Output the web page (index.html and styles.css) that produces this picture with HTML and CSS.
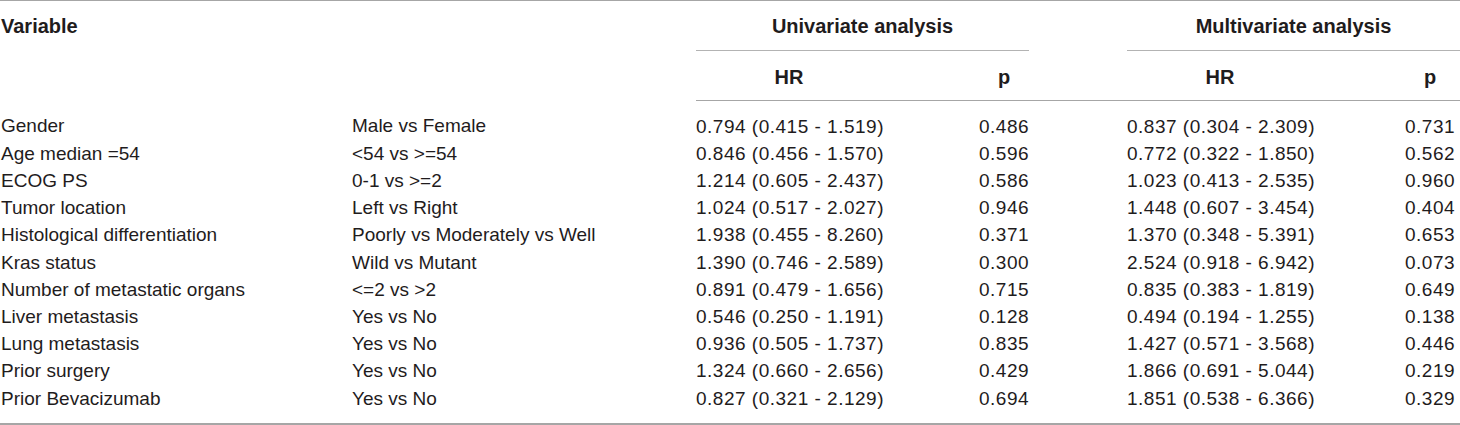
FILE: index.html
```html
<!DOCTYPE html>
<html lang="en">
<head>
  <meta charset="UTF-8" />
  <meta name="viewport" content="width=device-width, initial-scale=1.0" />
  <title>Cox regression analysis</title>
  <link rel="stylesheet" href="styles.css">
</head>
<body>
  <table class="cox">
    <colgroup>
      <col class="c-name">
      <col class="c-cmp">
      <col class="c-hr-uni">
      <col class="c-p">
      <col class="c-hr-multi">
      <col class="c-p-last">
    </colgroup>
    <thead>
      <tr>
        <th class="var" rowspan="2" colspan="2">Variable</th>
        <th class="group" colspan="2"><div class="group-label">Univariate analysis</div></th>
        <th class="group multi" colspan="2"><div class="group-label">Multivariate analysis</div></th>
      </tr>
      <tr class="sub">
        <th class="hr uni">HR</th>
        <th class="p">p</th>
        <th class="hr multi">HR</th>
        <th class="p last">p</th>
      </tr>
    </thead>
    <tbody>
      <tr>
        <td class="name">Gender</td>
        <td>Male vs Female</td>
        <td class="hr uni">0.794 (0.415 - 1.519)</td>
        <td class="p">0.486</td>
        <td class="hr multi">0.837 (0.304 - 2.309)</td>
        <td class="p last">0.731</td>
      </tr>
      <tr>
        <td class="name">Age median =54</td>
        <td>&lt;54 vs &gt;=54</td>
        <td class="hr uni">0.846 (0.456 - 1.570)</td>
        <td class="p">0.596</td>
        <td class="hr multi">0.772 (0.322 - 1.850)</td>
        <td class="p last">0.562</td>
      </tr>
      <tr>
        <td class="name">ECOG PS</td>
        <td>0-1 vs &gt;=2</td>
        <td class="hr uni">1.214 (0.605 - 2.437)</td>
        <td class="p">0.586</td>
        <td class="hr multi">1.023 (0.413 - 2.535)</td>
        <td class="p last">0.960</td>
      </tr>
      <tr>
        <td class="name">Tumor location</td>
        <td>Left vs Right</td>
        <td class="hr uni">1.024 (0.517 - 2.027)</td>
        <td class="p">0.946</td>
        <td class="hr multi">1.448 (0.607 - 3.454)</td>
        <td class="p last">0.404</td>
      </tr>
      <tr>
        <td class="name">Histological differentiation</td>
        <td>Poorly vs Moderately vs Well</td>
        <td class="hr uni">1.938 (0.455 - 8.260)</td>
        <td class="p">0.371</td>
        <td class="hr multi">1.370 (0.348 - 5.391)</td>
        <td class="p last">0.653</td>
      </tr>
      <tr>
        <td class="name">Kras status</td>
        <td>Wild vs Mutant</td>
        <td class="hr uni">1.390 (0.746 - 2.589)</td>
        <td class="p">0.300</td>
        <td class="hr multi">2.524 (0.918 - 6.942)</td>
        <td class="p last">0.073</td>
      </tr>
      <tr>
        <td class="name">Number of metastatic organs</td>
        <td>&lt;=2 vs &gt;2</td>
        <td class="hr uni">0.891 (0.479 - 1.656)</td>
        <td class="p">0.715</td>
        <td class="hr multi">0.835 (0.383 - 1.819)</td>
        <td class="p last">0.649</td>
      </tr>
      <tr>
        <td class="name">Liver metastasis</td>
        <td>Yes vs No</td>
        <td class="hr uni">0.546 (0.250 - 1.191)</td>
        <td class="p">0.128</td>
        <td class="hr multi">0.494 (0.194 - 1.255)</td>
        <td class="p last">0.138</td>
      </tr>
      <tr>
        <td class="name">Lung metastasis</td>
        <td>Yes vs No</td>
        <td class="hr uni">0.936 (0.505 - 1.737)</td>
        <td class="p">0.835</td>
        <td class="hr multi">1.427 (0.571 - 3.568)</td>
        <td class="p last">0.446</td>
      </tr>
      <tr>
        <td class="name">Prior surgery</td>
        <td>Yes vs No</td>
        <td class="hr uni">1.324 (0.660 - 2.656)</td>
        <td class="p">0.429</td>
        <td class="hr multi">1.866 (0.691 - 5.044)</td>
        <td class="p last">0.219</td>
      </tr>
      <tr>
        <td class="name">Prior Bevacizumab</td>
        <td>Yes vs No</td>
        <td class="hr uni">0.827 (0.321 - 2.129)</td>
        <td class="p">0.694</td>
        <td class="hr multi">1.851 (0.538 - 6.366)</td>
        <td class="p last">0.329</td>
      </tr>
    </tbody>
  </table>
</body>
</html>
```

FILE: styles.css
```css
body {
  margin: 0;
  background: #fff;
  font-family: "Liberation Sans", Arial, sans-serif;
  color: #1f1c1d;
}
.cox {
  width: 1460px;
  border-collapse: collapse;
  table-layout: fixed;
  font-size: 19px;
  border-top: 1px solid #a6a6a6;
  border-bottom: 2px solid #a6a6a6;
}
.c-name { width: 352px; }
.c-cmp { width: 344px; }
.c-hr-uni { width: 283px; }
.c-p { width: 50px; }
.c-hr-multi { width: 376px; }
.c-p-last { width: 55px; }

.cox th,
.cox td {
  padding: 0;
  white-space: nowrap;
}
.cox th {
  font-size: 20px;
  font-weight: bold;
  line-height: 22px;
}
.cox th.var {
  text-align: left;
  vertical-align: top;
  padding: 14px 0 0 1px;
}
.cox th.group {
  text-align: center;
  padding-top: 14px;
}
.cox th.group.multi {
  padding-left: 98px;
}
.group-label {
  padding-bottom: 13px;
  border-bottom: 1px solid #b3b3b3;
}
.cox .sub th {
  padding-top: 15px;
  padding-bottom: 12px;
  border-bottom: 1px solid #a6a6a6;
}
.cox td {
  line-height: 27.2px;
}
.cox td.name {
  padding-left: 1px;
}
.cox td.hr,
.cox td.p {
  letter-spacing: 0.5px;
}
.cox .hr {
  text-align: center;
}
.cox .hr.uni {
  padding-right: 97px;
}
.cox .hr.multi {
  padding-left: 98px;
  padding-right: 92px;
}
.cox .p {
  text-align: center;
}
.cox .p.last {
  padding-right: 5px;
}
.cox tbody tr:first-child td {
  padding-top: 11.5px;
}
.cox tbody tr:last-child td {
  padding-bottom: 11.5px;
}
```
